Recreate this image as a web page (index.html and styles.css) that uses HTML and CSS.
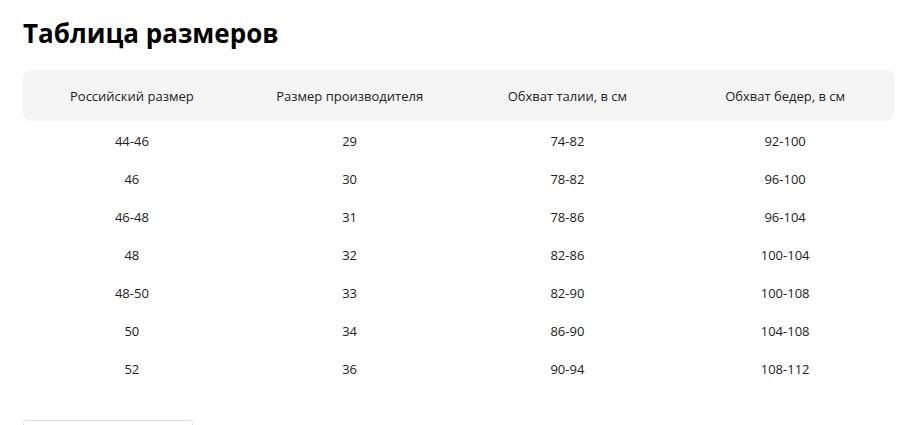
FILE: index.html
```html
<!DOCTYPE html>
<html lang="ru">
<head>
<meta charset="utf-8">
<link rel="stylesheet" href="styles.css">
</head>
<body>
<div class="page">
  <h1 class="title">Таблица размеров</h1>
  <div class="table">
    <div class="row head">
      <div class="cell">Российский размер</div>
      <div class="cell">Размер производителя</div>
      <div class="cell">Обхват талии, в см</div>
      <div class="cell">Обхват бедер, в см</div>
    </div>
    <div class="row"><div class="cell">44-46</div><div class="cell">29</div><div class="cell">74-82</div><div class="cell">92-100</div></div>
    <div class="row"><div class="cell">46</div><div class="cell">30</div><div class="cell">78-82</div><div class="cell">96-100</div></div>
    <div class="row"><div class="cell">46-48</div><div class="cell">31</div><div class="cell">78-86</div><div class="cell">96-104</div></div>
    <div class="row"><div class="cell">48</div><div class="cell">32</div><div class="cell">82-86</div><div class="cell">100-104</div></div>
    <div class="row"><div class="cell">48-50</div><div class="cell">33</div><div class="cell">82-90</div><div class="cell">100-108</div></div>
    <div class="row"><div class="cell">50</div><div class="cell">34</div><div class="cell">86-90</div><div class="cell">104-108</div></div>
    <div class="row"><div class="cell">52</div><div class="cell">36</div><div class="cell">90-94</div><div class="cell">108-112</div></div>
  </div>
  <div class="more"></div>
</div>
</body>
</html>
```
FILE: styles.css
```css
html, body { margin: 0; padding: 0; background: #fff; }
body { font-family: "Open Sans", "Noto Sans", sans-serif; color: #222; overflow: hidden; }
.page { padding: 15px 13px 0 23px; }
.title { margin: 0; font-size: 26px; font-weight: 700; line-height: 36px; color: #000; }
.table { margin-top: 19px; }
.row { display: grid; grid-template-columns: repeat(4, 1fr); height: 38px; align-items: center; }
.row.head { height: 51px; background: #f5f5f5; border-radius: 8px; margin-bottom: 1px; }
.cell { text-align: center; font-size: 13px; line-height: 18px; }
.more { margin-top: 32px; width: 168px; height: 40px; border: 1px solid #ddd; border-radius: 4px; }
```
